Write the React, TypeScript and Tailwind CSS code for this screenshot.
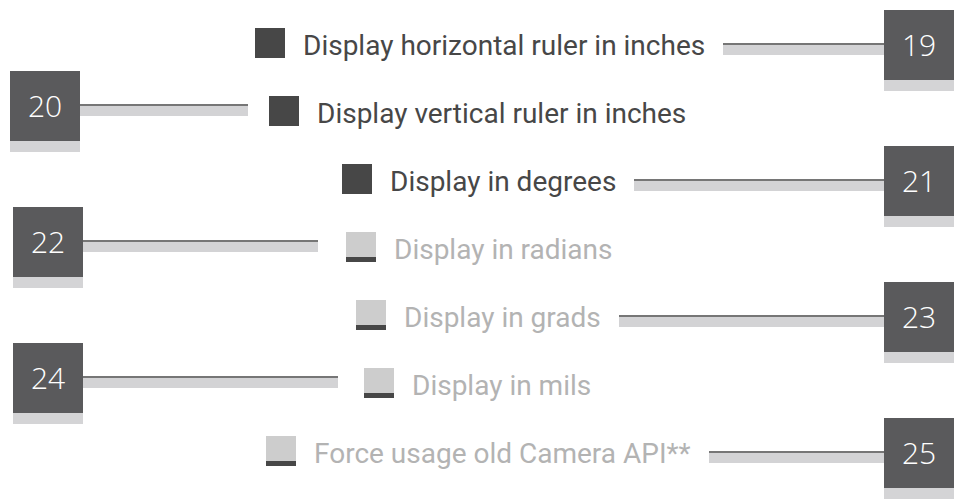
type Item = {
  label: string;
  num: number;
  checked: boolean;
  side: "left" | "right";
  indent: number;
  lineWidth?: number;
  gap?: number;
};

const items: Item[] = [
  { label: "Display horizontal ruler in inches", num: 19, checked: true, side: "right", indent: 255 },
  { label: "Display vertical ruler in inches", num: 20, checked: true, side: "left", indent: 10, lineWidth: 168, gap: 21 },
  { label: "Display in degrees", num: 21, checked: true, side: "right", indent: 342 },
  { label: "Display in radians", num: 22, checked: false, side: "left", indent: 13, lineWidth: 235, gap: 28 },
  { label: "Display in grads", num: 23, checked: false, side: "right", indent: 356 },
  { label: "Display in mils", num: 24, checked: false, side: "left", indent: 13, lineWidth: 255, gap: 26 },
  { label: "Force usage old Camera API**", num: 25, checked: false, side: "right", indent: 266 },
];

function Checkbox({ checked }: { checked: boolean }) {
  if (checked) {
    return <div className="w-[30px] h-[30px] shrink-0 bg-[#474747]" />;
  }
  return (
    <div className="w-[30px] h-[30px] shrink-0 flex flex-col">
      <div className="flex-1 bg-[#cdcdcd]" />
      <div className="h-[5px] bg-[#474747]" />
    </div>
  );
}

function Line({ width }: { width?: number }) {
  return (
    <div
      className="mt-[33px] h-[12px] border-t-2 border-[#767676] bg-[#d3d3d5] flex-1"
      style={width ? { width, flex: "none" } : undefined}
    />
  );
}

function NumBox({ num }: { num: number }) {
  return (
    <div className="w-[70px] shrink-0 flex flex-col">
      <div className="h-[70px] bg-[#5a5a5c] flex items-center justify-center text-white text-[30px] font-light font-['Open_Sans',sans-serif]">
        {num}
      </div>
      <div className="h-[11px] bg-[#d4d4d6]" />
    </div>
  );
}

function Label({ text, checked }: { text: string; checked: boolean }) {
  return (
    <span
      className={`ml-[18px] whitespace-nowrap text-[28px] leading-none pt-[6px] font-['Roboto',sans-serif] ${
        checked ? "text-[#474747]" : "text-[#b3b3b3]"
      }`}
    >
      {text}
    </span>
  );
}

export default function App() {
  return (
    <div className="w-[956px] h-[500px] bg-white overflow-hidden pt-[9px]">
      {items.map((it) =>
        it.side === "right" ? (
          <div key={it.num} className="flex h-[68px] items-center pr-[2px]" style={{ paddingLeft: it.indent }}>
            <Checkbox checked={it.checked} />
            <Label text={it.label} checked={it.checked} />
            <div className="ml-[18px] flex-1 flex items-start h-[81px] translate-y-[7px]">
              <Line />
              <NumBox num={it.num} />
            </div>
          </div>
        ) : (
          <div key={it.num} className="flex h-[68px] items-center" style={{ paddingLeft: it.indent }}>
            <div className="flex items-start h-[81px]">
              <NumBox num={it.num} />
              <Line width={it.lineWidth} />
            </div>
            <div className="flex items-center" style={{ marginLeft: it.gap }}>
              <Checkbox checked={it.checked} />
              <Label text={it.label} checked={it.checked} />
            </div>
          </div>
        )
      )}
    </div>
  );
}
